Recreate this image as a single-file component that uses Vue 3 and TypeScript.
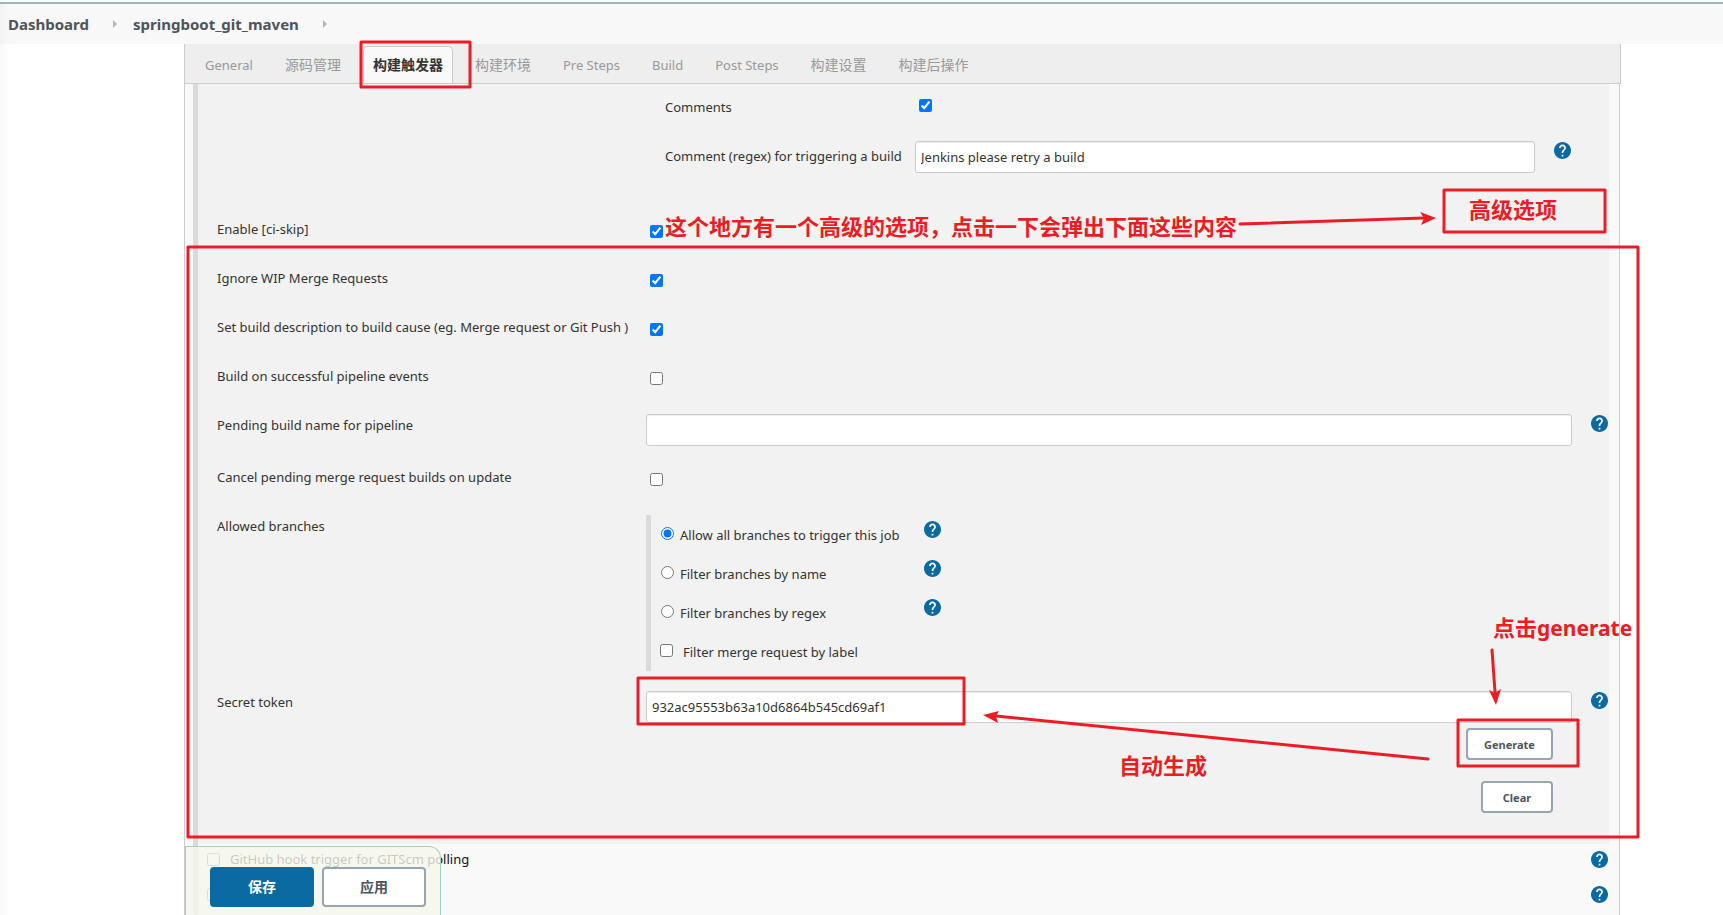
<script setup lang="ts">
import { defineComponent, h, ref } from 'vue'

interface Tab { name: string; cjk: boolean; active?: boolean }
interface Branch { id: string; name: string }

const tabs: Tab[] = [
  { name: 'General', cjk: false },
  { name: '源码管理', cjk: true },
  { name: '构建触发器', cjk: true, active: true },
  { name: '构建环境', cjk: true },
  { name: 'Pre Steps', cjk: false },
  { name: 'Build', cjk: false },
  { name: 'Post Steps', cjk: false },
  { name: '构建设置', cjk: true },
  { name: '构建后操作', cjk: true },
]

const branches: Branch[] = [
  { id: 'all', name: 'Allow all branches to trigger this job' },
  { id: 'name', name: 'Filter branches by name' },
  { id: 'regex', name: 'Filter branches by regex' },
]

const comments = ref(true)
const commentRegex = ref('Jenkins please retry a build')
const ciSkip = ref(true)
const ignoreWip = ref(true)
const setDescription = ref(true)
const pipelineEvents = ref(false)
const pendingName = ref('')
const cancelPending = ref(false)
const branchMode = ref('all')
const filterLabel = ref(false)
const token = ref('932ac95553b63a10d6864b545cd69af1')
const hookTrigger = ref(false)
const pollScm = ref(false)

const HelpIcon = defineComponent({
  setup: () => () =>
    h('svg', { viewBox: '2 2 20 20', width: 17, height: 17, 'aria-hidden': 'true', style: { display: 'block' } }, [
      h('path', {
        fill: '#0b6aa2',
        d: 'M12 2C6.48 2 2 6.48 2 12s4.48 10 10 10 10-4.48 10-10S17.52 2 12 2z',
      }),
      h('path', {
        fill: '#fff',
        d: 'M13 19h-2v-2h2v2zm2.07-7.75-.9.92C13.45 12.9 13 13.5 13 15h-2v-.5c0-1.1.45-2.1 1.17-2.83l1.24-1.26c.37-.36.59-.86.59-1.41 0-1.1-.9-2-2-2s-2 .9-2 2H8c0-2.21 1.79-4 4-4s4 1.79 4 4c0 .88-.36 1.68-.93 2.25z',
      }),
    ]),
})
</script>

<template>
  <div class="page">
    <header class="topline"></header>
    <nav class="crumbs" aria-label="Breadcrumb">
      <a href="#">Dashboard</a><i class="sep"></i>
      <a href="#">springboot_git_maven</a><i class="sep"></i>
    </nav>

    <main class="panel">
      <nav class="tabs" aria-label="Sections">
        <a v-for="t in tabs" :key="t.name" href="#" :class="{ cjk: t.cjk, active: t.active }">{{ t.name }}</a>
      </nav>

      <form class="body" @submit.prevent>
        <section class="group">
          <div class="nested">
            <div class="nrow">
              <label for="comments">Comments</label>
              <div><input id="comments" v-model="comments" type="checkbox" /></div>
            </div>
            <div class="nrow">
              <label for="regex">Comment (regex) for triggering a build</label>
              <input id="regex" v-model="commentRegex" type="text" />
              <button type="button" class="help" aria-label="Help"><HelpIcon /></button>
            </div>
          </div>

          <div class="row">
            <label for="ciskip">Enable [ci-skip]</label>
            <div><input id="ciskip" v-model="ciSkip" type="checkbox" /></div>
          </div>
          <div class="row">
            <label for="wip">Ignore WIP Merge Requests</label>
            <div><input id="wip" v-model="ignoreWip" type="checkbox" /></div>
          </div>
          <div class="row">
            <label for="desc">Set build description to build cause (eg. Merge request or Git Push )</label>
            <div><input id="desc" v-model="setDescription" type="checkbox" /></div>
          </div>
          <div class="row">
            <label for="events">Build on successful pipeline events</label>
            <div><input id="events" v-model="pipelineEvents" type="checkbox" /></div>
          </div>
          <div class="row pending">
            <label for="pending">Pending build name for pipeline</label>
            <input id="pending" v-model="pendingName" type="text" />
            <button type="button" class="help" aria-label="Help"><HelpIcon /></button>
          </div>
          <div class="row">
            <label for="cancel">Cancel pending merge request builds on update</label>
            <div><input id="cancel" v-model="cancelPending" type="checkbox" /></div>
          </div>
          <div class="row allowed">
            <span id="allowed" class="label">Allowed branches</span>
            <div class="branches" role="group" aria-labelledby="allowed">
              <div v-for="b in branches" :key="b.id" class="branch">
                <label><input v-model="branchMode" type="radio" name="branch" :value="b.id" />{{ b.name }}</label>
                <button type="button" class="help" aria-label="Help"><HelpIcon /></button>
              </div>
              <div class="branch by-label">
                <label><input v-model="filterLabel" type="checkbox" />Filter merge request by label</label>
              </div>
            </div>
          </div>
          <div class="row secret">
            <label for="token">Secret token</label>
            <div class="token">
              <input id="token" v-model="token" type="text" />
              <button type="button" class="btn generate">Generate</button>
              <button type="button" class="btn clear" @click="token = ''">Clear</button>
            </div>
            <button type="button" class="help" aria-label="Help"><HelpIcon /></button>
          </div>
        </section>

        <section class="triggers">
          <div class="trigger">
            <label><input v-model="hookTrigger" type="checkbox" />GitHub hook trigger for GITScm polling</label>
            <button type="button" class="help" aria-label="Help"><HelpIcon /></button>
          </div>
          <div class="trigger">
            <label><input v-model="pollScm" type="checkbox" aria-label="轮询 SCM" /></label>
            <button type="button" class="help" aria-label="Help"><HelpIcon /></button>
          </div>
        </section>
      </form>
    </main>

    <div class="sticker">
      <button type="button" class="save">保存</button>
      <button type="button" class="apply">应用</button>
    </div>

    <svg class="notes">
      <g class="frames">
        <rect x="361" y="42" width="109" height="45" />
        <rect x="1444" y="190" width="161" height="42" />
        <rect x="188" y="247" width="1450" height="590" />
        <rect x="638" y="678" width="326" height="46" />
        <rect x="1458" y="720" width="120" height="46" />
        <path d="M1240 224 L1424 218" />
        <path d="M1492 650 L1495 692" />
        <path d="M1428 759 L996 716" />
      </g>
      <g class="heads">
        <path d="M1436 218 L1420 212 L1424 218 L1421 225 Z" />
        <path d="M1496 705 L1489 690 L1495 693 L1501 689 Z" />
        <path d="M983 715 L999 711 L996 716 L998 723 Z" />
      </g>
      <text x="665" y="235">这个地方有一个高级的选项，点击一下会弹出下面这些内容</text>
      <text x="1469" y="218">高级选项</text>
      <text x="1493" y="636">点击<tspan class="latin">generate</tspan></text>
      <text x="1119" y="774">自动生成</text>
    </svg>
  </div>
</template>

<style>
body { margin: 0; }
</style>

<style scoped>
* { box-sizing: border-box; }
.page {
  position: relative;
  height: 100vh;
  overflow: hidden;
  background: linear-gradient(90deg, #f8f8f8, #fff 10px);
  color: #333;
  font: 13px/20px "Noto Sans", "Noto Sans CJK SC", sans-serif;
}
button, input { font: inherit; color: inherit; }
.topline { height: 4px; background: #f0ffff; border-bottom: 2px solid #a5b5b5; }
.crumbs {
  display: flex;
  align-items: center;
  height: 40px;
  padding: 0 8px;
  background: linear-gradient(90deg, #f3f3f3, #f8f8f8 10px);
  font-size: 15px;
  font-weight: 700;
}
.crumbs a { color: #4d545d; text-decoration: none; }
.sep {
  margin: 0 16px 0 24px;
  border: 4px solid transparent;
  border-left-color: #b5b5b5;
  border-right: 0;
}
.panel { margin: 0 102px 0 184px; }
.tabs {
  display: flex;
  align-items: flex-end;
  gap: 12px;
  height: 40px;
  padding-left: 10px;
  background: #eee;
  border: 1px solid #ccc;
  border-top: 0;
}
.tabs a {
  height: 37px;
  padding: 0 10px;
  line-height: 38px;
  color: #999;
  text-decoration: none;
}
.tabs .cjk { font-size: 14px; }
.tabs .active {
  background: #f9f9f9;
  border: 1px solid #ccc;
  border-width: 1px 1px 0;
  border-radius: 5px 5px 0 0;
  padding: 0 9px;
  line-height: 36px;
  color: #333;
  font-weight: 700;
}
.body {
  margin-right: 1px;
  padding: 0 10px 40px 8px;
  background: #f9f9f9;
  border: 1px solid #ccc;
  border-width: 0 1px;
}
.group {
  padding: 7px 0 0 19px;
  background: #f2f2f2;
  border-left: 5px solid #dadada;
}
input[type="checkbox"], input[type="radio"] { width: 13px; height: 13px; margin: 0; }
input[type="text"] {
  width: 100%;
  height: 32px;
  padding: 0 5px;
  background: #fff;
  border: 1px solid #ccc;
  border-radius: 3px;
  box-shadow: inset 0 1px 1px rgba(0, 0, 0, 0.08);
}
.help { width: 17px; height: 17px; padding: 0; border: 0; background: none; }
.nested { margin: 0 38px 0 448px; }
.nrow {
  display: grid;
  grid-template-columns: 250px 1fr 17px;
  align-items: start;
  height: 49px;
}
.nrow + .nrow { height: 73px; }
.nrow label { padding-top: 6px; }
.nrow input[type="checkbox"] { display: block; margin: 8px 4px; }
.nrow input[type="text"] { width: auto; margin: 1px 19px 0 0; }
.nrow .help { margin-top: 2px; }
.row {
  display: grid;
  grid-template-columns: 429px 1fr 37px;
  align-items: start;
  height: 49px;
}
.row > label, .row > .label { padding-top: 6px; }
.row > div > input[type="checkbox"] { display: block; margin: 12px 4px 0; }
.row > input[type="text"], .token { margin-top: 5px; }
.row > .help { margin: 6px 0 0 19px; }
.pending { height: 52px; }
.allowed { height: 176px; }
.secret { height: 158px; }
.branches { margin-top: 5px; padding-left: 10px; border-left: 5px solid #dadada; }
.branch { display: flex; align-items: flex-start; height: 39px; }
.branch label { display: flex; width: 263px; padding-top: 10px; gap: 6px; }
.branch input { margin-top: 2px; }
.branch .help { margin-top: 6px; }
.by-label { margin-left: -1px; }
.by-label label { gap: 10px; }
.token { display: flex; flex-direction: column; align-items: flex-end; }
.btn {
  height: 32px;
  margin-right: 19px;
  padding: 1px 0 0;
  background: #fff;
  border: 2px solid #98a5ae;
  border-radius: 4px;
  color: #4d545d;
  font-size: 11px;
  font-weight: 700;
}
.generate { width: 87px; margin-top: 5px; }
.clear { width: 72px; margin-top: 21px; }
.triggers { border-left: 5px solid #dadada; }
.trigger {
  display: flex;
  justify-content: space-between;
  align-items: center;
  height: 35px;
  padding: 0 1px 5px 9px;
}
.trigger label { display: flex; align-items: center; gap: 10px; color: #111; }
.sticker {
  position: absolute;
  left: 185px;
  bottom: 0;
  display: flex;
  gap: 8px;
  padding: 20px 14px 8px 24px;
  background: rgba(245, 248, 236, 0.8);
  border: 1px solid #a8cfbc;
  border-bottom: 0;
  border-radius: 0 12px 0 0;
}
.sticker button {
  width: 104px;
  height: 40px;
  border: 2px solid #98a5ae;
  border-radius: 4px;
  background: #fff;
  color: #4d545d;
  font-size: 14px;
  font-weight: 700;
}
.sticker .save { background: #0b6aa2; border-color: #0b6aa2; color: #fff; }
.notes {
  position: absolute;
  inset: 0;
  width: 100%;
  height: 100%;
  overflow: visible;
  pointer-events: none;
}
.frames { fill: none; stroke: #ed1c24; stroke-width: 3; stroke-linecap: round; stroke-linejoin: round; }
.heads { fill: #ed1c24; }
.notes text { fill: #ed1c24; font-size: 22px; font-weight: 700; }
.notes .latin { font-size: 21px; }
</style>
